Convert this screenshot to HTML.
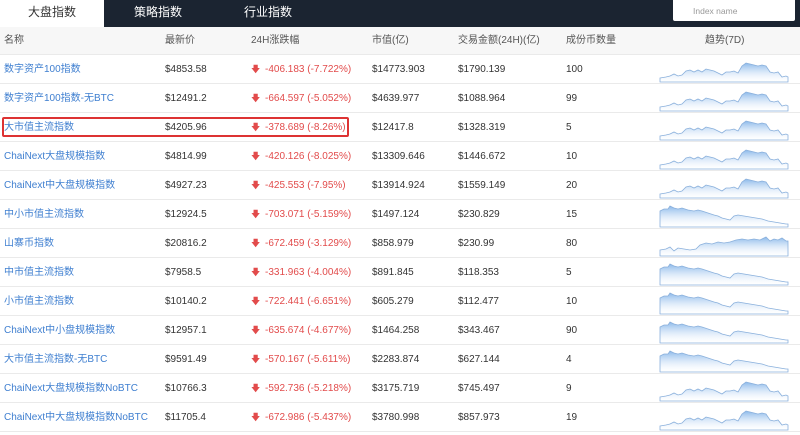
<!DOCTYPE html>
<html><head><meta charset="utf-8"><style>
*{margin:0;padding:0;box-sizing:border-box}
body{width:800px;height:435px;overflow:hidden;background:#fff;font-family:"Liberation Sans","Noto Sans CJK SC",sans-serif;font-size:10px;color:#333}
.top{height:27px;background:#1b2431;position:relative}
.tab{position:absolute;top:0;height:27px;line-height:24px;font-size:12px;color:#fff;text-align:center}
.tab.act{background:#fff;color:#333;left:0;width:104px}
.search{position:absolute;left:673px;top:0;width:122px;height:21px;background:#fff;border-radius:0 0 2px 2px;font-size:8.5px;color:#999;padding-left:20px;line-height:22px}
.row{position:absolute;left:0;width:800px;height:29px;border-bottom:1px solid #eaeaea}
.hd{top:27px;height:28px;background:#f7f7f7}
.row span{position:absolute;top:0;line-height:29px;white-space:nowrap}
.hd span{line-height:28px;color:#555}
.n{left:4px;color:#3f7fd0}
.hd .n{color:#555}
.p{left:165px}
.c{left:251px;color:#e24b4b}
.c b{display:inline-block;width:14px;font-weight:normal;font-size:9px}
.m{left:372px}.v{left:458px}.k{left:566px}
svg.s{position:absolute;left:658px;top:3px}
.box{position:absolute;left:2px;top:117px;width:347px;height:20px;border:2px solid #d33;border-radius:2px}
</style></head><body>
<svg width="0" height="0" style="position:absolute"><defs>
<linearGradient id="g" x1="0" y1="0" x2="0" y2="1"><stop offset="0" stop-color="#8ab8ea"/><stop offset="1" stop-color="#fff" stop-opacity="0.2"/></linearGradient>
<path id="A" d="M2 20 L8 19 L12 18 L16 16 L20 18 L24 17 L28 13 L32 12 L36 14 L40 12 L44 14 L48 11 L52 12 L56 13 L60 15 L64 17 L68 14 L72 14 L76 13 L80 15 L84 8 L88 5 L92 6 L96 7 L100 8 L104 7 L108 8 L112 14 L116 15 L120 14 L124 19 L128 18 L130 19 L130 24 L2 24Z" fill="url(#g)" stroke="#8ab0dc" stroke-width="0.8"/>
<path id="B" d="M2 8 L6 6 L10 6 L12 3 L16 5 L20 6 L24 5 L30 7 L36 8 L40 7 L44 8 L50 10 L56 12 L60 13 L64 15 L68 16 L72 17 L76 13 L80 12 L86 13 L92 14 L98 15 L104 16 L110 18 L116 19 L122 20 L128 21 L130 21 L130 24 L2 24Z" fill="url(#g)" stroke="#8ab0dc" stroke-width="0.8"/>
<path id="C" d="M2 18 L8 17 L12 15 L16 19 L20 16 L26 17 L32 18 L38 17 L42 13 L48 11 L54 12 L60 10 L66 11 L72 10 L78 8 L84 7 L90 8 L96 7 L102 8 L108 5 L112 9 L116 7 L120 8 L124 6 L128 9 L130 9 L130 24 L2 24Z" fill="url(#g)" stroke="#8ab0dc" stroke-width="0.8"/>
</defs></svg>
<div class="top">
<div class="tab act">大盘指数</div>
<div class="tab" style="left:118px;width:80px">策略指数</div>
<div class="tab" style="left:228px;width:80px">行业指数</div>
<div class="search">Index name</div>
</div>
<div class="row hd"><span class="n">名称</span><span class="p">最新价</span><span class="c" style="color:#555">24H涨跌幅</span><span class="m">市值(亿)</span><span class="v">交易金额(24H)(亿)</span><span class="k">成份币数量</span><span style="left:705px">趋势(7D)</span></div>

<div class="row" style="top:55px"><span class="n">数字资产100指数</span><span class="p">$4853.58</span><span class="c"><b>🡇</b>-406.183 (-7.722%)</span><span class="m">$14773.903</span><span class="v">$1790.139</span><span class="k">100</span><svg class="s" width="134" height="25"><use href="#A"/></svg></div>
<div class="row" style="top:84px"><span class="n">数字资产100指数-无BTC</span><span class="p">$12491.2</span><span class="c"><b>🡇</b>-664.597 (-5.052%)</span><span class="m">$4639.977</span><span class="v">$1088.964</span><span class="k">99</span><svg class="s" width="134" height="25"><use href="#A"/></svg></div>
<div class="row" style="top:113px"><span class="n">大市值主流指数</span><span class="p">$4205.96</span><span class="c"><b>🡇</b>-378.689 (-8.26%)</span><span class="m">$12417.8</span><span class="v">$1328.319</span><span class="k">5</span><svg class="s" width="134" height="25"><use href="#A"/></svg></div>
<div class="row" style="top:142px"><span class="n">ChaiNext大盘规模指数</span><span class="p">$4814.99</span><span class="c"><b>🡇</b>-420.126 (-8.025%)</span><span class="m">$13309.646</span><span class="v">$1446.672</span><span class="k">10</span><svg class="s" width="134" height="25"><use href="#A"/></svg></div>
<div class="row" style="top:171px"><span class="n">ChaiNext中大盘规模指数</span><span class="p">$4927.23</span><span class="c"><b>🡇</b>-425.553 (-7.95%)</span><span class="m">$13914.924</span><span class="v">$1559.149</span><span class="k">20</span><svg class="s" width="134" height="25"><use href="#A"/></svg></div>
<div class="row" style="top:200px"><span class="n">中小市值主流指数</span><span class="p">$12924.5</span><span class="c"><b>🡇</b>-703.071 (-5.159%)</span><span class="m">$1497.124</span><span class="v">$230.829</span><span class="k">15</span><svg class="s" width="134" height="25"><use href="#B"/></svg></div>
<div class="row" style="top:229px"><span class="n">山寨币指数</span><span class="p">$20816.2</span><span class="c"><b>🡇</b>-672.459 (-3.129%)</span><span class="m">$858.979</span><span class="v">$230.99</span><span class="k">80</span><svg class="s" width="134" height="25"><use href="#C"/></svg></div>
<div class="row" style="top:258px"><span class="n">中市值主流指数</span><span class="p">$7958.5</span><span class="c"><b>🡇</b>-331.963 (-4.004%)</span><span class="m">$891.845</span><span class="v">$118.353</span><span class="k">5</span><svg class="s" width="134" height="25"><use href="#B"/></svg></div>
<div class="row" style="top:287px"><span class="n">小市值主流指数</span><span class="p">$10140.2</span><span class="c"><b>🡇</b>-722.441 (-6.651%)</span><span class="m">$605.279</span><span class="v">$112.477</span><span class="k">10</span><svg class="s" width="134" height="25"><use href="#B"/></svg></div>
<div class="row" style="top:316px"><span class="n">ChaiNext中小盘规模指数</span><span class="p">$12957.1</span><span class="c"><b>🡇</b>-635.674 (-4.677%)</span><span class="m">$1464.258</span><span class="v">$343.467</span><span class="k">90</span><svg class="s" width="134" height="25"><use href="#B"/></svg></div>
<div class="row" style="top:345px"><span class="n">大市值主流指数-无BTC</span><span class="p">$9591.49</span><span class="c"><b>🡇</b>-570.167 (-5.611%)</span><span class="m">$2283.874</span><span class="v">$627.144</span><span class="k">4</span><svg class="s" width="134" height="25"><use href="#B"/></svg></div>
<div class="row" style="top:374px"><span class="n">ChaiNext大盘规模指数NoBTC</span><span class="p">$10766.3</span><span class="c"><b>🡇</b>-592.736 (-5.218%)</span><span class="m">$3175.719</span><span class="v">$745.497</span><span class="k">9</span><svg class="s" width="134" height="25"><use href="#A"/></svg></div>
<div class="row" style="top:403px"><span class="n">ChaiNext中大盘规模指数NoBTC</span><span class="p">$11705.4</span><span class="c"><b>🡇</b>-672.986 (-5.437%)</span><span class="m">$3780.998</span><span class="v">$857.973</span><span class="k">19</span><svg class="s" width="134" height="25"><use href="#A"/></svg></div>
<div class="box"></div>
</body></html>
